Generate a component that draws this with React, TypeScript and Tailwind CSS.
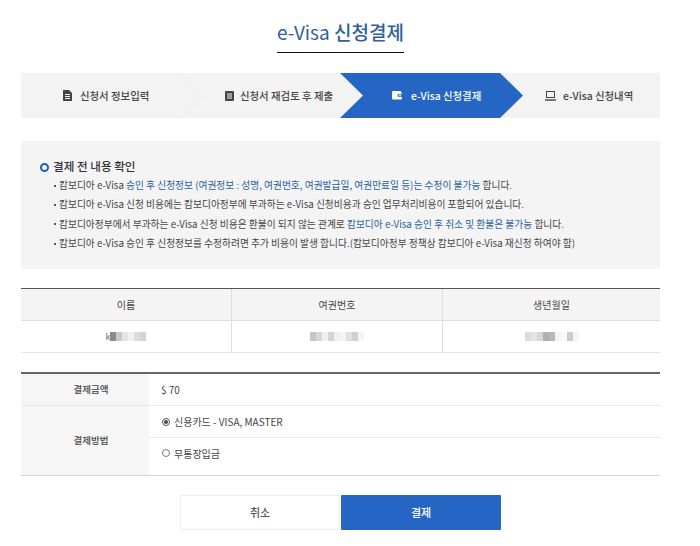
import { ReactNode } from 'react';

const KR = "font-['Noto_Sans_CJK_KR','Noto_Sans',sans-serif]";

function DocIcon() {
  return (
    <svg width="9" height="11" viewBox="0 0 9 11" className="shrink-0">
      <path d="M0 0H6L9 3V11H0Z" fill="#444" />
      <path d="M2 4.5H7M2 6.5H7M2 8.5H7" stroke="#f3f3f3" strokeWidth="1" />
    </svg>
  );
}

function ListIcon() {
  return (
    <svg width="9" height="10" viewBox="0 0 9 10" className="shrink-0">
      <rect width="9" height="10" rx="1" fill="#444" />
      <path d="M2 3H7M2 5H7M2 7H7" stroke="#f3f3f3" strokeWidth="1" />
    </svg>
  );
}

function WalletIcon() {
  return (
    <svg width="11" height="9" viewBox="0 0 11 9" className="shrink-0">
      <path d="M1 0H9V1.5H10V3H7A1.5 1.5 0 0 0 7 6H10V7.5A1 1 0 0 1 9 8.5H1A1 1 0 0 1 0 7.5V1A1 1 0 0 1 1 0Z" fill="#fff" />
      <circle cx="8" cy="4.5" r="1" fill="#fff" />
    </svg>
  );
}

function LaptopIcon() {
  return (
    <svg width="11" height="10" viewBox="0 0 11 10" className="shrink-0">
      <rect x="1.5" y="0.5" width="8" height="6" fill="none" stroke="#444" strokeWidth="1" />
      <path d="M0 9H11" stroke="#444" strokeWidth="1.4" />
    </svg>
  );
}

function Bullet({ children }: { children: ReactNode }) {
  return (
    <li className="flex h-[19.4px] items-center whitespace-nowrap">
      <span className="mr-[3px] h-[2px] w-[2px] shrink-0 bg-[#555]" />
      <span>{children}</span>
    </li>
  );
}

function Em({ children }: { children: ReactNode }) {
  return <span className="text-[#2a5f9c]">{children}</span>;
}

// 모자이크 처리된 값
function Blurred({ shades }: { shades: string[] }) {
  return (
    <div className="flex h-[9px] items-center blur-[0.7px]">
      {shades.map((c, i) => (
        <span key={i} className="h-full w-[6px]" style={{ background: c }} />
      ))}
    </div>
  );
}

export default function App() {
  return (
    <div className={`${KR} h-[546px] w-[700px] overflow-hidden bg-white text-[#444]`}>
      <div className="ml-[21px] w-[639px]">
        {/* 타이틀 */}
        <div className="flex justify-center pt-[19px]">
          <h1 className="h-[34px] w-[127px] border-b border-[#111] text-[19px] font-medium leading-[26px] whitespace-nowrap text-[#2f5f9e]">
            <span className="font-normal">e-Visa</span> 신청결제
          </h1>
        </div>

        {/* 단계 표시 */}
        <div className="relative mt-[20px] flex h-[45px] bg-[#f3f3f3] text-[10.4px] font-medium">
          <svg width="639" height="45" viewBox="0 0 639 45" className="absolute top-0 left-0">
            <path d="M159 0L182 22.5L159 45" fill="none" stroke="#e9e9e9" strokeWidth="1" />
            <path d="M319 0H479L502 22.5L479 45H319L342 22.5Z" fill="#2566c4" />
          </svg>
          <div className="relative flex w-[160px] items-center gap-[8px] pl-[42px] whitespace-nowrap">
            <DocIcon />
            <span>신청서 정보입력</span>
          </div>
          <div className="relative flex w-[160px] items-center gap-[6px] pl-[44px] whitespace-nowrap">
            <ListIcon />
            <span>신청서 재검토 후 제출</span>
          </div>
          <div className="relative flex w-[160px] items-center gap-[8px] pl-[51px] whitespace-nowrap text-white">
            <WalletIcon />
            <span>e-Visa 신청결제</span>
          </div>
          <div className="relative flex w-[159px] items-center gap-[7px] pl-[44px] whitespace-nowrap">
            <LaptopIcon />
            <span>e-Visa 신청내역</span>
          </div>
        </div>

        {/* 안내 */}
        <div className="mt-[23px] h-[128px] bg-[#f4f4f4] pt-[17px] pl-[19px] text-[9.72px] leading-none">
          <div className="flex h-[18px] items-center text-[11.6px] font-medium text-[#333]">
            <span className="mr-[4px] h-[9px] w-[9px] rounded-full border-2 border-[#1f5fb4]" />
            결제 전 내용 확인
          </div>
          <ul className="pl-[14px]">
            <Bullet>
              캄보디아 e-Visa <Em>승인 후 신청정보 (여권정보 : 성명, 여권번호, 여권발급일, 여권만료일 등)는 수정이 불가능</Em> 합니다.
            </Bullet>
            <Bullet>캄보디아 e-Visa 신청 비용에는 캄보디아정부에 부과하는 e-Visa 신청비용과 승인 업무처리비용이 포함되어 있습니다.</Bullet>
            <Bullet>
              캄보디아정부에서 부과하는 e-Visa 신청 비용은 환불이 되지 않는 관계로 <Em>캄보디아 e-Visa 승인 후 취소 및 환불은 불가능</Em> 합니다.
            </Bullet>
            <Bullet>캄보디아 e-Visa 승인 후 신청정보를 수정하려면 추가 비용이 발생 합니다.(캄보디아정부 정책상 캄보디아 e-Visa 재신청 하여야 함)</Bullet>
          </ul>
        </div>

        {/* 신청자 정보 */}
        <div className="mt-[19px] grid grid-cols-[211px_211px_217px] border-t border-b border-t-[#555] border-b-[#e3e3e3] text-[10px]">
          <div className="flex h-[32px] items-center justify-center border-r border-b border-[#dedede] bg-[#f4f4f4]">이름</div>
          <div className="flex h-[32px] items-center justify-center border-r border-b border-[#dedede] bg-[#f4f4f4]">여권번호</div>
          <div className="flex h-[32px] items-center justify-center border-b border-[#dedede] bg-[#f4f4f4]">생년월일</div>
          <div className="flex h-[31px] items-center justify-center border-r border-[#dedede]">
            <span className="text-[9px] text-[#666]">k</span>
            <Blurred shades={['#8a8a8a', '#c8c8c8', '#e4e4e4', '#f0f0f0', '#dcdcdc', '#d4d4d4']} />
          </div>
          <div className="flex h-[31px] items-center justify-center border-r border-[#dedede]">
            <Blurred shades={['#c6c6c6', '#d8d8d8', '#f0f0f0', '#d4d4d4', '#f0f0f0', '#f4f4f4', '#e0e0e0', '#d0d0d0', '#f4f4f4']} />
          </div>
          <div className="flex h-[31px] items-center justify-center">
            <Blurred shades={['#dcdcdc', '#e4e4e4', '#d8d8d8', '#b0b0b0', '#b8b8b8', '#f4f4f4', '#f8f8f8', '#cccccc', '#f4f4f4']} />
          </div>
        </div>

        {/* 결제 정보 */}
        <div className="mt-[19px] grid grid-cols-[128px_511px] border-t-2 border-b border-t-[#666] border-b-[#d4d4d4] text-[10px]">
          <div className="flex h-[32px] items-center justify-center border-b border-[#e8e8e8] bg-[#f6f6f6] pl-[12px] text-[9.5px] font-medium">결제금액</div>
          <div className="flex h-[32px] items-center border-b border-[#e8e8e8] pl-[12px]">$ 70</div>
          <div className="flex items-center justify-center bg-[#f6f6f6] pl-[12px] text-[9.5px] font-medium">결제방법</div>
          <div>
            <div className="flex h-[32px] items-center gap-[4px] border-b border-[#e8e8e8] pl-[13px]">
              <span className="flex h-[8px] w-[8px] items-center justify-center rounded-full border border-[#555]">
                <span className="h-[4px] w-[4px] rounded-full bg-[#444]" />
              </span>
              신용카드 - VISA, MASTER
            </div>
            <div className="flex h-[37px] items-center gap-[4px] pb-[7px] pl-[13px]">
              <span className="h-[8px] w-[8px] rounded-full border border-[#777]" />
              무통장입금
            </div>
          </div>
        </div>

        {/* 버튼 */}
        <div className="mt-[19px] flex justify-center gap-px">
          <button className="h-[35px] w-[160px] border border-[#eeeeee] bg-white text-[11px] font-medium text-[#555]">취소</button>
          <button className="h-[35px] w-[160px] rounded-[1px] bg-[#2566c4] text-[11px] font-medium text-white">결제</button>
        </div>
      </div>
    </div>
  );
}
